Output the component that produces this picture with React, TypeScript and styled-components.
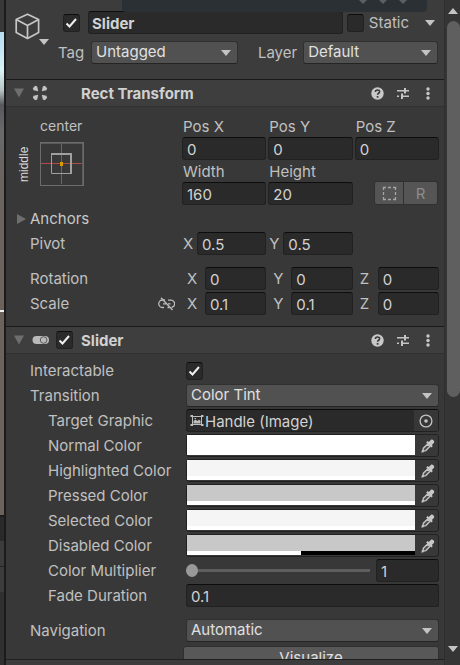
import React, { useState } from "react";
import styled, { createGlobalStyle, css } from "styled-components";

const GlobalStyle = createGlobalStyle`
  *, *::before, *::after { box-sizing: border-box; }
  body { margin: 0; background: #383838; }
  body, button, input, select {
    font-family: Inter, "Liberation Sans", sans-serif;
    font-size: 15px;
    color: #c0c0c0;
  }
  svg { display: block; flex: none; }
`;

/* ---------- window ---------- */

const Window = styled.div`
  position: relative;
  display: flex;
  height: 100vh;
  overflow: hidden;
  background: #383838;
`;

const SceneEdge = styled.div`
  flex: none;
  width: 6px;
  border-right: 2px solid #1b1b1b;
  background: linear-gradient(
    #383838 32px, #b5dcf0 32px, #d8f3f6 70px, #b9c4c4 90px, #56585b 105px,
    #69696c 130px, #6b635e 180px, #6b625c 310px, #f0f0f0 310px, #f0f0f0 312px,
    #6b625c 312px, #6b625c 515px, #1c1c1c 515px, #1c1c1c 517px, #2a2a2a 517px,
    #2a2a2a 541px, #3c3c3c 541px, #3c3c3c 566px, #222222 566px, #222222 567px,
    #3c3c3c 567px, #3c3c3c 592px, #303030 592px
  );
`;

const Inspector = styled.main`
  flex: 1;
  min-width: 0;
  display: flex;
  flex-direction: column;
`;

const Scroll = styled.div`
  flex: 1;
  min-height: 0;
  overflow: hidden;
`;

const PreviewBar = styled.footer`
  flex: none;
  height: 6px;
  border-top: 1px solid #202020;
  background: #3c3c3c;
`;

const FloatingBar = styled.div`
  position: absolute;
  top: 0;
  left: 122px;
  right: 33px;
  height: 12px;
  display: flex;
  justify-content: flex-end;
  gap: 12px;
  padding-right: 20px;
  border-radius: 0 0 4px 4px;
  background: #2b3034;
`;

/* ---------- scrollbar ---------- */

const ScrollBar = styled.div`
  flex: none;
  width: 16px;
  display: flex;
  flex-direction: column;
  align-items: center;
  padding: 0 0 6px 1px;
  border-left: 1px solid #2e2e2e;
  background: #353535;
`;

const ScrollButton = styled.button`
  flex: none;
  display: flex;
  align-items: center;
  justify-content: center;
  width: 14px;
  height: 21px;
  padding: 0;
  border: 0;
  background: none;
`;

const Track = styled.div`
  flex: 1;
  width: 13px;
`;

const Thumb = styled.div`
  height: 61%;
  border-radius: 7px;
  background: #5f5f5f;
`;

/* ---------- controls ---------- */

const Field = styled.input`
  flex: 1;
  width: 100%;
  min-width: 0;
  height: 23px;
  padding: 1px 4px 0;
  border: 1px solid #212121;
  border-top-color: #0d0d0d;
  border-radius: 3px;
  outline: none;
  background: #2a2a2a;
  color: #d2d2d2;
`;

const NameField = styled(Field)`
  font-weight: 700;
  padding: 1px 3px 0;
`;

const CheckWrap = styled.span`
  flex: none;
  display: grid;
  width: 17px;
  height: 18px;
  & > * { grid-area: 1 / 1; place-self: center; }
  svg { pointer-events: none; visibility: hidden; }
  input:checked + svg { visibility: visible; }
`;

const CheckInput = styled.input`
  appearance: none;
  width: 17px;
  height: 18px;
  margin: 0;
  border: 1px solid #212121;
  border-top-color: #0d0d0d;
  border-radius: 3px;
  background: #2a2a2a;
`;

const SelectWrap = styled.span`
  flex: 1;
  min-width: 0;
  display: grid;
  align-items: center;
  & > * { grid-area: 1 / 1; }
  svg { justify-self: end; margin-right: 7px; pointer-events: none; }
`;

const SelectInput = styled.select`
  appearance: none;
  width: 100%;
  height: 23px;
  padding: 0 20px 2px 4px;
  border: 1px solid #303030;
  border-bottom-color: #242424;
  border-radius: 3px;
  outline: none;
  background: #515151;
  color: #e0e0e0;
`;

const IconButton = styled.button`
  display: flex;
  align-items: center;
  justify-content: center;
  width: 25px;
  height: 23px;
  padding: 0;
  border: 0;
  background: none;
  color: #c4c4c4;
`;

/* ---------- object header ---------- */

const ObjectHeader = styled.header`
  display: flex;
  height: 79px;
  padding: 11px 6px 0 9px;
  background: #3c3c3c;
`;

const ObjectIcon = styled.button`
  flex: none;
  display: flex;
  align-items: flex-start;
  width: 43px;
  height: 36px;
  padding: 2px 0 0;
  border: 0;
  background: none;
`;

const CornerArrow = styled.span`
  margin: 26px 0 0 -2px;
`;

const HeaderLines = styled.div`
  flex: 1;
  min-width: 0;
  display: flex;
  flex-direction: column;
  gap: 7px;
`;

const NameRow = styled.div`
  display: flex;
  align-items: center;
  gap: 4px;
  height: 23px;
  padding-left: 5px;
`;

const NameSlot = styled.div`
  flex: 1;
  min-width: 0;
  display: flex;
  padding-left: 4px;
`;

const StaticGroup = styled.div`
  display: flex;
  align-items: center;
  gap: 5px;
`;

const StaticMenu = styled(IconButton)`
  width: 25px;
  padding-left: 8px;
`;

const TagRow = styled.div`
  display: grid;
  grid-template-columns: 33px 12fr 65px 11fr;
  align-items: center;
`;

const TagLabel = styled.label<{ $end?: boolean }>`
  padding-right: ${(p) => (p.$end ? "6px" : "0")};
  text-align: ${(p) => (p.$end ? "right" : "left")};
  line-height: 23px;
`;

/* ---------- component sections ---------- */

const Section = styled.section`
  border-top: 1px solid #1a1a1a;
`;

const SectionHeader = styled.div`
  display: flex;
  align-items: center;
  height: 27px;
  padding: 0 4px 0 8px;
  border-bottom: 1px solid #303030;
  background: #3e3e3e;
`;

const TitleIcons = styled.div`
  flex: none;
  display: flex;
  align-items: center;
  width: 67px;
`;

const Foldout = styled.button`
  width: 18px;
  height: 20px;
  padding: 0;
  border: 0;
  background: none;
`;

const IconSlot = styled.span`
  display: flex;
  width: 24px;
`;

const Title = styled.h2`
  flex: 1;
  margin: 0;
  padding-top: 2px;
  font-size: 15px;
  font-weight: 700;
  line-height: 20px;
  color: #d0d0d0;
`;

const RectBody = styled.div`
  padding: 10px 5px 10px 0;
`;

const RectTop = styled.div`
  display: flex;
  height: 89px;
`;

const AnchorBlock = styled.div`
  flex: none;
  display: grid;
  grid-template-columns: 16px 44px;
  grid-template-rows: 18px 44px;
  column-gap: 8px;
  row-gap: 7px;
  width: 176px;
  padding-left: 10px;
  line-height: 18px;
`;

const AnchorTop = styled.span`
  grid-column: 2;
  font-size: 14px;
`;

const AnchorSide = styled.span`
  writing-mode: vertical-rl;
  transform: rotate(180deg);
  text-align: center;
  font-family: "Liberation Sans", sans-serif;
  font-size: 12px;
  line-height: 16px;
  color: #d8d8d8;
`;

const AnchorButton = styled.button`
  padding: 0;
  border: 0;
  background: none;
`;

const Triple = styled.div`
  flex: 1;
  min-width: 0;
  display: grid;
  grid-template-columns: repeat(3, 1fr);
  column-gap: 2px;
  align-content: start;
`;

const Stacked = styled.label`
  display: flex;
  flex-direction: column;
  height: 45px;
  line-height: 20px;
  & > span { padding-left: 1px; }
  & > input { flex: none; }
`;

const ToggleGroup = styled.div`
  align-self: start;
  justify-self: end;
  display: flex;
  margin: 19px 1px 0 0;
`;

const ToolToggle = styled.button<{ $last?: boolean }>`
  display: flex;
  align-items: center;
  justify-content: center;
  width: ${(p) => (p.$last ? "34px" : "30px")};
  height: 24px;
  padding: 0;
  border: 1px solid #303030;
  border-left-width: ${(p) => (p.$last ? "0" : "1px")};
  border-radius: ${(p) => (p.$last ? "0 3px 3px 0" : "3px 0 0 3px")};
  background: #555555;
  color: #8c8c8c;
`;

const RectRow = styled.div<{ $gap?: boolean }>`
  display: flex;
  align-items: center;
  height: 25px;
  margin-top: ${(p) => (p.$gap ? "10px" : "0")};
`;

const RectLabel = styled.div`
  flex: none;
  display: flex;
  align-items: center;
  justify-content: space-between;
  width: 176px;
  padding: 0 7px 0 24px;
`;

const AnchorsToggle = styled.button`
  display: flex;
  align-items: center;
  gap: 4px;
  padding: 0 0 0 10px;
  border: 0;
  background: none;
  line-height: 25px;
  color: #c8c8c8;
`;

const LinkButton = styled(IconButton)`
  width: 17px;
`;

const Axis = styled.label<{ $wide?: boolean }>`
  display: flex;
  align-items: center;
  ${(p) =>
    p.$wide
      ? css`padding-left: 5px; & > span { flex: none; width: 18px; }`
      : css`padding-left: 1px; & > span { flex: none; width: 14px; }`}
`;

/* ---------- slider section ---------- */

const SliderBody = styled.div`
  padding: 4px 5px 0 24px;
`;

const PropRow = styled.div<{ $indent?: boolean; $gap?: boolean }>`
  display: flex;
  align-items: center;
  height: 25px;
  margin-top: ${(p) => (p.$gap ? "10px" : "0")};
  & > :first-child {
    flex: none;
    width: 156px;
    padding-left: ${(p) => (p.$indent ? "18px" : "0")};
    white-space: nowrap;
  }
`;

const ObjectField = styled.div`
  flex: 1;
  min-width: 0;
  display: flex;
  align-items: center;
  height: 23px;
  padding-left: 3px;
  border: 1px solid #212121;
  border-top-color: #0d0d0d;
  border-radius: 3px;
  background: #2a2a2a;
`;

const ObjectName = styled.span`
  flex: 1;
  padding: 2px 0 0 1px;
  color: #d2d2d2;
`;

const Picker = styled(IconButton)`
  width: 24px;
  height: 21px;
  background: #373737;
`;

const ColorField = styled.div`
  flex: 1;
  min-width: 0;
  display: flex;
  height: 23px;
  border: 1px solid #212121;
  border-radius: 3px;
  background: #383838;
`;

const Swatch = styled.button<{ $color: string; $alpha: number }>`
  flex: 1;
  height: 20px;
  padding: 0;
  border: 0;
  background:
    linear-gradient(${(p) => p.$color}, ${(p) => p.$color}) top / 100% 16px no-repeat,
    linear-gradient(90deg, #ffffff ${(p) => p.$alpha}%, #000000 ${(p) => p.$alpha}%);
`;

const Dropper = styled(IconButton)`
  width: 23px;
  height: 21px;
  padding-left: 2px;
`;

const Range = styled.input`
  appearance: none;
  flex: 1;
  min-width: 0;
  height: 20px;
  margin: 0 6px 0 0;
  background: linear-gradient(#5e5e5e, #5e5e5e) center / 100% 3px no-repeat;
  &::-webkit-slider-thumb {
    appearance: none;
    width: 12px;
    height: 13px;
    border-radius: 50%;
    background: #999999;
  }
`;

const NumberSlot = styled.div`
  flex: none;
  display: flex;
  width: 63px;
`;

const Visualize = styled.button`
  display: block;
  width: calc(100% - 153px);
  height: 23px;
  margin: 3px 0 0 153px;
  padding: 0;
  border: 1px solid #303030;
  border-radius: 3px;
  background: #585858;
  color: #e0e0e0;
`;

/* ---------- icons ---------- */

const Arrow = ({ dir = "down", color = "#c4c4c4" }: { dir?: "down" | "up" | "right"; color?: string }) => {
  const d = { down: "M0 0h10L5 6z", up: "M0 6h10L5 0z", right: "M1 0l9 5-9 5z" }[dir];
  const height = dir === "right" ? 10 : 6;
  return (
    <svg width="10" height={height} viewBox={`0 0 10 ${height}`}>
      <path d={d} fill={color} />
    </svg>
  );
};

const FoldArrow = () => (
  <svg width="10" height="10" viewBox="0 0 10 10"><path d="M0 0.5h10L5 9.5z" fill="#6e6e6e" /></svg>
);

const Cube = () => (
  <svg width="26" height="27" viewBox="0 0 26 27" fill="none" stroke="#c6c6c6" strokeWidth="1.7" strokeLinejoin="round">
    <path d="M12.500 1.200L23.600 6.500v13L12.500 25.500 1.200 19.500v-13z" />
    <path d="M1.200 6.500L12.500 12.500l11.100-6M12.500 12.500v13" />
  </svg>
);

const Tick = () => (
  <svg width="13" height="12" viewBox="0 0 13 12"><path d="M1.500 6.500L4.500 9.500L11 2" fill="none" stroke="#f0f0f0" strokeWidth="2" /></svg>
);

const RectIcon = () => (
  <svg width="16" height="16" viewBox="0 0 16 16" fill="#c4c4c4">
    {[0, 90, 180, 270].map((a) => (
      <path key={a} transform={`rotate(${a} 8 8)`} d="M0.800 3.200L3.200 0.800L5.200 1.600L6.200 6.200L1.600 5.200z" />
    ))}
  </svg>
);

const SliderIcon = () => (
  <svg width="18" height="10" viewBox="0 0 18 10">
    <path d="M4.500 1H13a4 4 0 010 8H4.500a4 4 0 010-8z" fill="#b9b9b9" />
    <circle cx="11.600" cy="5" r="3.300" fill="#b9b9b9" stroke="#5a5a5a" />
  </svg>
);

const Help = () => (
  <svg width="13" height="13" viewBox="0 0 13 13">
    <circle cx="6.500" cy="6.500" r="6.200" fill="#c8c8c8" />
    <path d="M4.400 5c0-2.700 4.200-2.600 4.200-.2 0 1.500-2 1.400-2 3" fill="none" stroke="#3a3a3a" strokeWidth="1.600" />
    <path d="M5.700 9h1.800v1.700H5.700z" fill="#3a3a3a" />
  </svg>
);

const Preset = () => (
  <svg width="12" height="13" viewBox="0 0 12 13" fill="#c4c4c4">
    <path d="M0 3h7v1.500H0zM7 1h2v5.500H7zM9 3h3v1.500H9zM0 8.500h2v1.500H0zM4 6.500h2V12H4zM6 8.500H12v1.500H6z" />
  </svg>
);

const Kebab = () => (
  <svg width="4" height="13" viewBox="0 0 4 13" fill="#c8c8c8">
    <circle cx="2" cy="2" r="1.700" /><circle cx="2" cy="6.500" r="1.700" /><circle cx="2" cy="11" r="1.700" />
  </svg>
);

const AnchorGlyph = () => (
  <svg width="44" height="44" viewBox="0 0 44 44" fill="none">
    <rect x="0.500" y="0.500" width="43" height="43" stroke="#6c6c6c" />
    <path d="M1 1.200h42M42.800 1v42" stroke="#6c6c6c" />
    <path d="M21.500 2v40M1 21.500h41" stroke="#b04a48" />
    <path d="M11.500 11v20.500h19" stroke="#a0a0a0" />
    <path d="M11 12h20v20" stroke="#a0a0a0" strokeWidth="2" />
    <rect x="20" y="20" width="3" height="4" fill="#d99a00" />
  </svg>
);

const Blueprint = () => (
  <svg width="15" height="15" viewBox="0 0 15 15" fill="none" stroke="#a6a6a6" strokeWidth="1.300">
    <path d="M1.500 4V1.500H4M6 1.500h3M11 1.500h2.500V4M13.500 6v3M13.500 11v2.500H11M9 13.500H6M4 13.500H1.500V11M1.500 9V6" />
  </svg>
);

const Unlink = () => (
  <svg width="17" height="14" viewBox="0 0 17 14" fill="none" stroke="#bcbcbc" strokeWidth="1.300">
    <path d="M7 3H4.500a3.600 3.600 0 000 7.500H6M10 3.200h2.500a3.600 3.600 0 011 7.200M5 6.800h3M10 6.800h2.500M9.500 10.500h2" />
    <path d="M3 0.800L14.500 13" />
  </svg>
);

const ImageIcon = () => (
  <svg width="14" height="13" viewBox="0 0 14 13" fill="none" stroke="#bdbdbd">
    <path d="M2.500 2.500h9v8h-9z" />
    <path d="M0.500 1h2.500v2H0.500zM11 1h2.500v2H11zM0.500 10h2.500v2H0.500zM11 10h2.500v2H11z" fill="#bdbdbd" stroke="none" />
    <path d="M3.500 9.500V7l2-1.500L7.500 7 9 5.500l1.500 1.500v2.500z" fill="#bdbdbd" stroke="none" />
    <path d="M4.500 4.500h1.500" />
  </svg>
);

const Target = () => (
  <svg width="14" height="14" viewBox="0 0 14 14"><circle cx="7" cy="7" r="5.900" fill="none" stroke="#c4c4c4" strokeWidth="1.300" /><circle cx="7" cy="7" r="1.800" fill="#c4c4c4" /></svg>
);

const DropperIcon = () => (
  <svg width="14" height="14" viewBox="0 0 14 14">
    <path d="M9.800 1c1.500-1.500 4.500 1.200 3 3L10.900 6l.9 1.200-1.500 1.300-5.100-5L6.600 2l1.200 1z" fill="#c8c8c8" />
    <path d="M6.400 5.200L2.400 9.200 1.800 12.200l3-.6L8.800 7.600z" fill="#4a4a4a" stroke="#c4c4c4" strokeWidth="1.400" />
    <path d="M0.300 13.700l0.700-3 2.300 2.300z" fill="#c4c4c4" />
  </svg>
);

const Diamond = () => (
  <svg width="8" height="4" viewBox="0 0 8 4"><path d="M0 0h8L4 4z" fill="#596067" /></svg>
);

/* ---------- pieces ---------- */

const Check = ({ label, id, on = false }: { label?: string; id?: string; on?: boolean }) => (
  <CheckWrap>
    <CheckInput type="checkbox" id={id} aria-label={label} defaultChecked={on} />
    <Tick />
  </CheckWrap>
);

const Select = ({ id, options }: { id: string; options: string[] }) => (
  <SelectWrap>
    <SelectInput id={id}>{options.map((o) => <option key={o}>{o}</option>)}</SelectInput>
    <Arrow />
  </SelectWrap>
);

const HeaderActions = () => (
  <>
    <IconButton aria-label="Help"><Help /></IconButton>
    <IconButton aria-label="Presets"><Preset /></IconButton>
    <IconButton aria-label="More options"><Kebab /></IconButton>
  </>
);

const VectorFields = ({ names, values, wide, owner }: { names: string[]; values: string[]; wide?: boolean; owner: string }) => (
  <Triple>
    {names.map((n, i) => (
      <Axis key={n} $wide={wide}>
        <span>{n}</span>
        <Field aria-label={`${owner} ${n}`} defaultValue={values[i]} />
      </Axis>
    ))}
  </Triple>
);

const StackedField = ({ name, value }: { name: string; value: string }) => (
  <Stacked>
    <span>{name}</span>
    <Field defaultValue={value} />
  </Stacked>
);

const COLORS = [
  { name: "Normal Color", color: "#ffffff", alpha: 100 },
  { name: "Highlighted Color", color: "#f5f5f5", alpha: 100 },
  { name: "Pressed Color", color: "#c8c8c8", alpha: 100 },
  { name: "Selected Color", color: "#f5f5f5", alpha: 100 },
  { name: "Disabled Color", color: "#c8c8c8", alpha: 50 },
];

export default function App() {
  const [multiplier, setMultiplier] = useState("1");

  return (
    <Window>
      <GlobalStyle />
      <SceneEdge />
      <Inspector>
        <Scroll>
          <ObjectHeader>
            <ObjectIcon aria-label="Select icon">
              <Cube />
              <CornerArrow><Arrow /></CornerArrow>
            </ObjectIcon>
            <HeaderLines>
              <NameRow>
                <Check label="Active" on />
                <NameSlot><NameField aria-label="Name" defaultValue="Slider" /></NameSlot>
                <StaticGroup>
                  <Check id="static" />
                  <label htmlFor="static">Static</label>
                </StaticGroup>
                <StaticMenu aria-label="Static options"><Arrow /></StaticMenu>
              </NameRow>
              <TagRow>
                <TagLabel htmlFor="tag">Tag</TagLabel>
                <Select id="tag" options={["Untagged", "Player"]} />
                <TagLabel htmlFor="layer" $end>Layer</TagLabel>
                <Select id="layer" options={["Default", "UI"]} />
              </TagRow>
            </HeaderLines>
          </ObjectHeader>

          <Section>
            <SectionHeader>
              <TitleIcons>
                <Foldout aria-label="Collapse Rect Transform"><FoldArrow /></Foldout>
                <IconSlot><RectIcon /></IconSlot>
              </TitleIcons>
              <Title>Rect Transform</Title>
              <HeaderActions />
            </SectionHeader>
            <RectBody>
              <RectTop>
                <AnchorBlock>
                  <AnchorTop>center</AnchorTop>
                  <AnchorSide>middle</AnchorSide>
                  <AnchorButton aria-label="Anchor presets"><AnchorGlyph /></AnchorButton>
                </AnchorBlock>
                <Triple>
                  <StackedField name="Pos X" value="0" />
                  <StackedField name="Pos Y" value="0" />
                  <StackedField name="Pos Z" value="0" />
                  <StackedField name="Width" value="160" />
                  <StackedField name="Height" value="20" />
                  <ToggleGroup>
                    <ToolToggle aria-label="Blueprint mode"><Blueprint /></ToolToggle>
                    <ToolToggle $last aria-label="Raw edit mode">R</ToolToggle>
                  </ToggleGroup>
                </Triple>
              </RectTop>
              <RectRow>
                <AnchorsToggle><Arrow dir="right" color="#6e6e6e" />Anchors</AnchorsToggle>
              </RectRow>
              <RectRow>
                <RectLabel>Pivot</RectLabel>
                <VectorFields owner="Pivot" names={["X", "Y"]} values={["0.5", "0.5"]} />
              </RectRow>
              <RectRow $gap>
                <RectLabel>Rotation</RectLabel>
                <VectorFields owner="Rotation" wide names={["X", "Y", "Z"]} values={["0", "0", "0"]} />
              </RectRow>
              <RectRow>
                <RectLabel>
                  Scale
                  <LinkButton aria-label="Constrain proportions"><Unlink /></LinkButton>
                </RectLabel>
                <VectorFields owner="Scale" wide names={["X", "Y", "Z"]} values={["0.1", "0.1", "0"]} />
              </RectRow>
            </RectBody>
          </Section>

          <Section>
            <SectionHeader>
              <TitleIcons>
                <Foldout aria-label="Collapse Slider"><FoldArrow /></Foldout>
                <IconSlot><SliderIcon /></IconSlot>
                <Check label="Slider enabled" on />
              </TitleIcons>
              <Title>Slider</Title>
              <HeaderActions />
            </SectionHeader>
            <SliderBody>
              <PropRow>
                <label htmlFor="interactable">Interactable</label>
                <Check id="interactable" on />
              </PropRow>
              <PropRow>
                <label htmlFor="transition">Transition</label>
                <Select id="transition" options={["Color Tint", "Sprite Swap", "Animation"]} />
              </PropRow>
              <PropRow $indent>
                <span>Target Graphic</span>
                <ObjectField>
                  <ImageIcon />
                  <ObjectName>Handle (Image)</ObjectName>
                  <Picker aria-label="Pick target graphic"><Target /></Picker>
                </ObjectField>
              </PropRow>
              {COLORS.map((c) => (
                <PropRow $indent key={c.name}>
                  <span>{c.name}</span>
                  <ColorField>
                    <Swatch aria-label={c.name} $color={c.color} $alpha={c.alpha} />
                    <Dropper aria-label={`Sample ${c.name}`}><DropperIcon /></Dropper>
                  </ColorField>
                </PropRow>
              ))}
              <PropRow $indent>
                <label htmlFor="multiplier">Color Multiplier</label>
                <Range id="multiplier" type="range" min="1" max="5" step="0.1" value={multiplier} onChange={(e) => setMultiplier(e.target.value)} />
                <NumberSlot>
                  <Field aria-label="Color Multiplier value" value={multiplier} onChange={(e) => setMultiplier(e.target.value)} />
                </NumberSlot>
              </PropRow>
              <PropRow $indent>
                <label htmlFor="fade">Fade Duration</label>
                <Field id="fade" defaultValue="0.1" />
              </PropRow>
              <PropRow $gap>
                <label htmlFor="navigation">Navigation</label>
                <Select id="navigation" options={["Automatic", "None"]} />
              </PropRow>
              <Visualize>Visualize</Visualize>
            </SliderBody>
          </Section>
        </Scroll>
        <PreviewBar />
      </Inspector>
      <ScrollBar>
        <ScrollButton aria-label="Scroll up"><Arrow dir="up" /></ScrollButton>
        <Track><Thumb /></Track>
        <ScrollButton aria-label="Scroll down"><Arrow /></ScrollButton>
      </ScrollBar>
      <FloatingBar><Diamond /><Diamond /><Diamond /></FloatingBar>
    </Window>
  );
}
